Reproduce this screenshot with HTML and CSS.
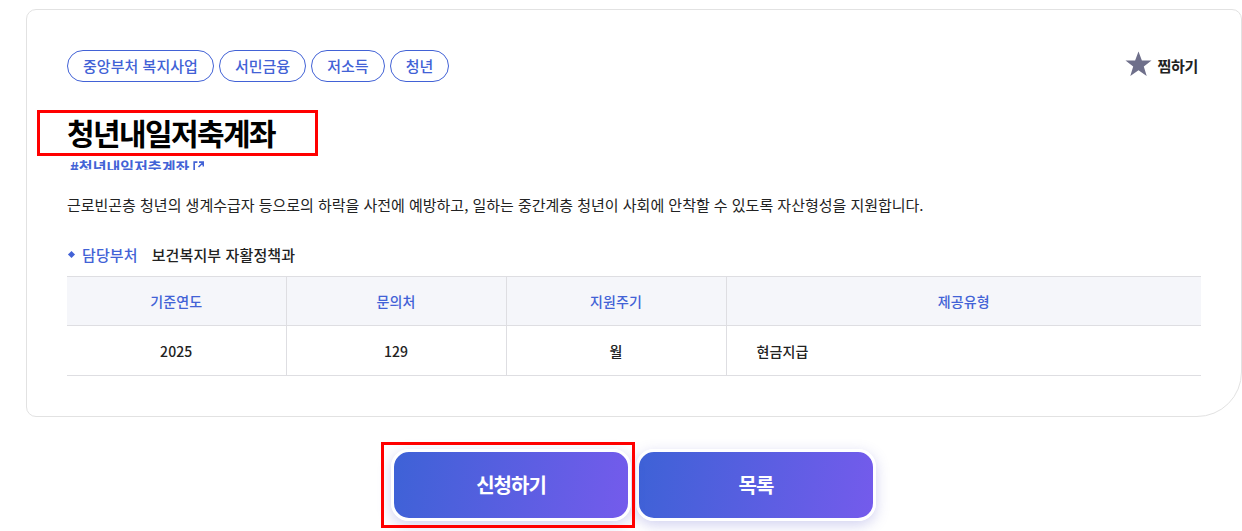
FILE: index.html
```html
<!DOCTYPE html>
<html lang="ko">
<head>
    <meta charset="UTF-8">
    <title>청년내일저축계좌</title>
    <link rel="stylesheet" href="styles.css">
</head>
<body>
    <div class="card">
        <div class="topRow">
            <ul class="tags">
                <li>중앙부처 복지사업</li>
                <li>서민금융</li>
                <li>저소득</li>
                <li>청년</li>
            </ul>
            <button class="zzim">
                <svg class="star" width="27" height="26" viewBox="0 0 27 26"><path d="M13.500 0.500l3.400 9h9.600l-7.700 5.900 2.900 9.600-8.200-5.700-8.200 5.700 2.900-9.600L0.500 9.500h9.600z"/></svg>
                찜하기
            </button>
        </div>
        <div class="titleWrap">
            <h1>청년내일저축계좌</h1>
            <span class="redBox"></span>
        </div>
        <div class="hash">
            <a>#청년내일저축계좌
                <svg width="11" height="13" viewBox="0 0 10 12"><path d="M4 2H1v9.500M5 6.500L9 2.500M5.500 2H9.500V6" fill="none" stroke="#4262d6" stroke-width="1.500"/></svg>
            </a>
        </div>
        <p class="desc">근로빈곤층 청년의 생계수급자 등으로의 하락을 사전에 예방하고, 일하는 중간계층 청년이 사회에 안착할 수 있도록 자산형성을 지원합니다.</p>
        <div class="dept">
            <span class="dot"></span>
            <span class="deptLabel">담당부처</span>
            <span class="deptName">보건복지부 자활정책과</span>
        </div>
        <table>
            <tr>
                <th class="c0">기준연도</th>
                <th class="c1">문의처</th>
                <th class="c1">지원주기</th>
                <th>제공유형</th>
            </tr>
            <tr>
                <td>2025</td>
                <td>129</td>
                <td>월</td>
                <td class="left">현금지급</td>
            </tr>
        </table>
    </div>
    <div class="btns">
        <div class="btnWrap">
            <a class="btn">신청하기</a>
            <span class="redBox2"></span>
        </div>
        <a class="btn">목록</a>
    </div>
</body>
</html>
```

FILE: styles.css
```css
*{
    box-sizing: border-box;
}
html,body{
    margin:0;
    padding:0;
    height:531px;
    overflow: hidden;
    background-color: white;
    font-family: "Noto Sans CJK KR","Noto Sans",sans-serif;
    color:#111;
}
.card{
    width:1216px;
    height:408px;
    margin:9px 0 0 26px;
    padding:39px 40px 0 40px;
    border:1px solid #e2e2e2;
    border-radius: 10px 10px 45px 10px;
}
.topRow{
    display: flex;
    justify-content: space-between;
    align-items: center;
    height:33px;
}
.tags{
    display: flex;
    gap:5px;
    margin:0;
    padding:0;
    list-style: none;
}
.tags li{
    height:32px;
    line-height:30px;
    padding:0 15px;
    border:1px solid #4262d6;
    border-radius: 16px;
    color:#4262d6;
    font-size:15px;
    font-weight:500;
    letter-spacing:0.03px;
}
.zzim{
    display: flex;
    align-items: center;
    gap:5px;
    margin-right:3px;
    padding:0;
    border:none;
    background: none;
    font-family: inherit;
    font-size:15px;
    font-weight:700;
    letter-spacing:-0.3px;
    color:#222;
}
.star{
    margin-top:-3px;
    fill:#6e6f8a;
}
.titleWrap{
    position: relative;
    margin-top:28px;
    height:44px;
}
h1{
    margin:0;
    font-size:30px;
    line-height:44px;
    font-weight:700;
    letter-spacing:-1.6px;
    color:#000;
}
.redBox{
    position: absolute;
    left:-30px;
    top:0;
    width:281px;
    height:46px;
    border:3px solid #f00;
}
.hash{
    height:14px;
    margin-top:2px;
    padding-left:3px;
    overflow: hidden;
}
.hash a{
    display: block;
    font-size:15px;
    line-height:22px;
    font-weight:700;
    color:#4262d6;
}
.desc{
    margin:23px 0 0 0;
    font-size:15px;
    line-height:24px;
    letter-spacing:-0.02px;
    color:#222;
}
.dept{
    display: flex;
    align-items: center;
    height:24px;
    margin-top:25px;
    font-size:15px;
    font-weight:500;
    letter-spacing:0.12px;
}
.dot{
    width:5px;
    height:5px;
    margin:0 8px 0 2px;
    background-color:#4262d6;
    transform: rotate(45deg);
}
.deptLabel{
    color:#4262d6;
    margin-right:14px;
}
.deptName{
    color:#222;
}
table{
    width:1134px;
    margin-top:10px;
    border-collapse: collapse;
    table-layout: fixed;
    border-top:1px solid #dedee2;
}
th,td{
    border-bottom:1px solid #dedee2;
    border-right:1px solid #dedee2;
    text-align: center;
    font-size:14px;
    font-weight:500;
    letter-spacing:0.1px;
}
th:last-child,td:last-child{
    border-right:none;
}
th{
    height:49px;
    background-color:#f5f6fa;
    color:#4262d6;
}
td{
    height:50px;
    color:#222;
}
.c0{
    width:219px;
}
.c1{
    width:220px;
}
td.left{
    text-align: left;
    padding-left:30px;
}
.btns{
    display: flex;
    justify-content: center;
    gap:5px;
    margin-top:32px;
    padding-left:25px;
}
.btnWrap{
    position: relative;
}
.btn{
    display: block;
    width:240px;
    height:72px;
    line-height:66px;
    text-align: center;
    border:3px solid white;
    border-radius: 18px;
    background: linear-gradient(100deg,#3d62d6,#755bec);
    background-origin: border-box;
    box-shadow: 0 4px 14px rgba(90,90,200,0.28);
    color:white;
    font-size:20px;
    font-weight:700;
    letter-spacing:-1px;
}
.redBox2{
    position: absolute;
    left:-10px;
    top:-7px;
    width:254px;
    height:86px;
    border:3px solid #f00;
}
```
